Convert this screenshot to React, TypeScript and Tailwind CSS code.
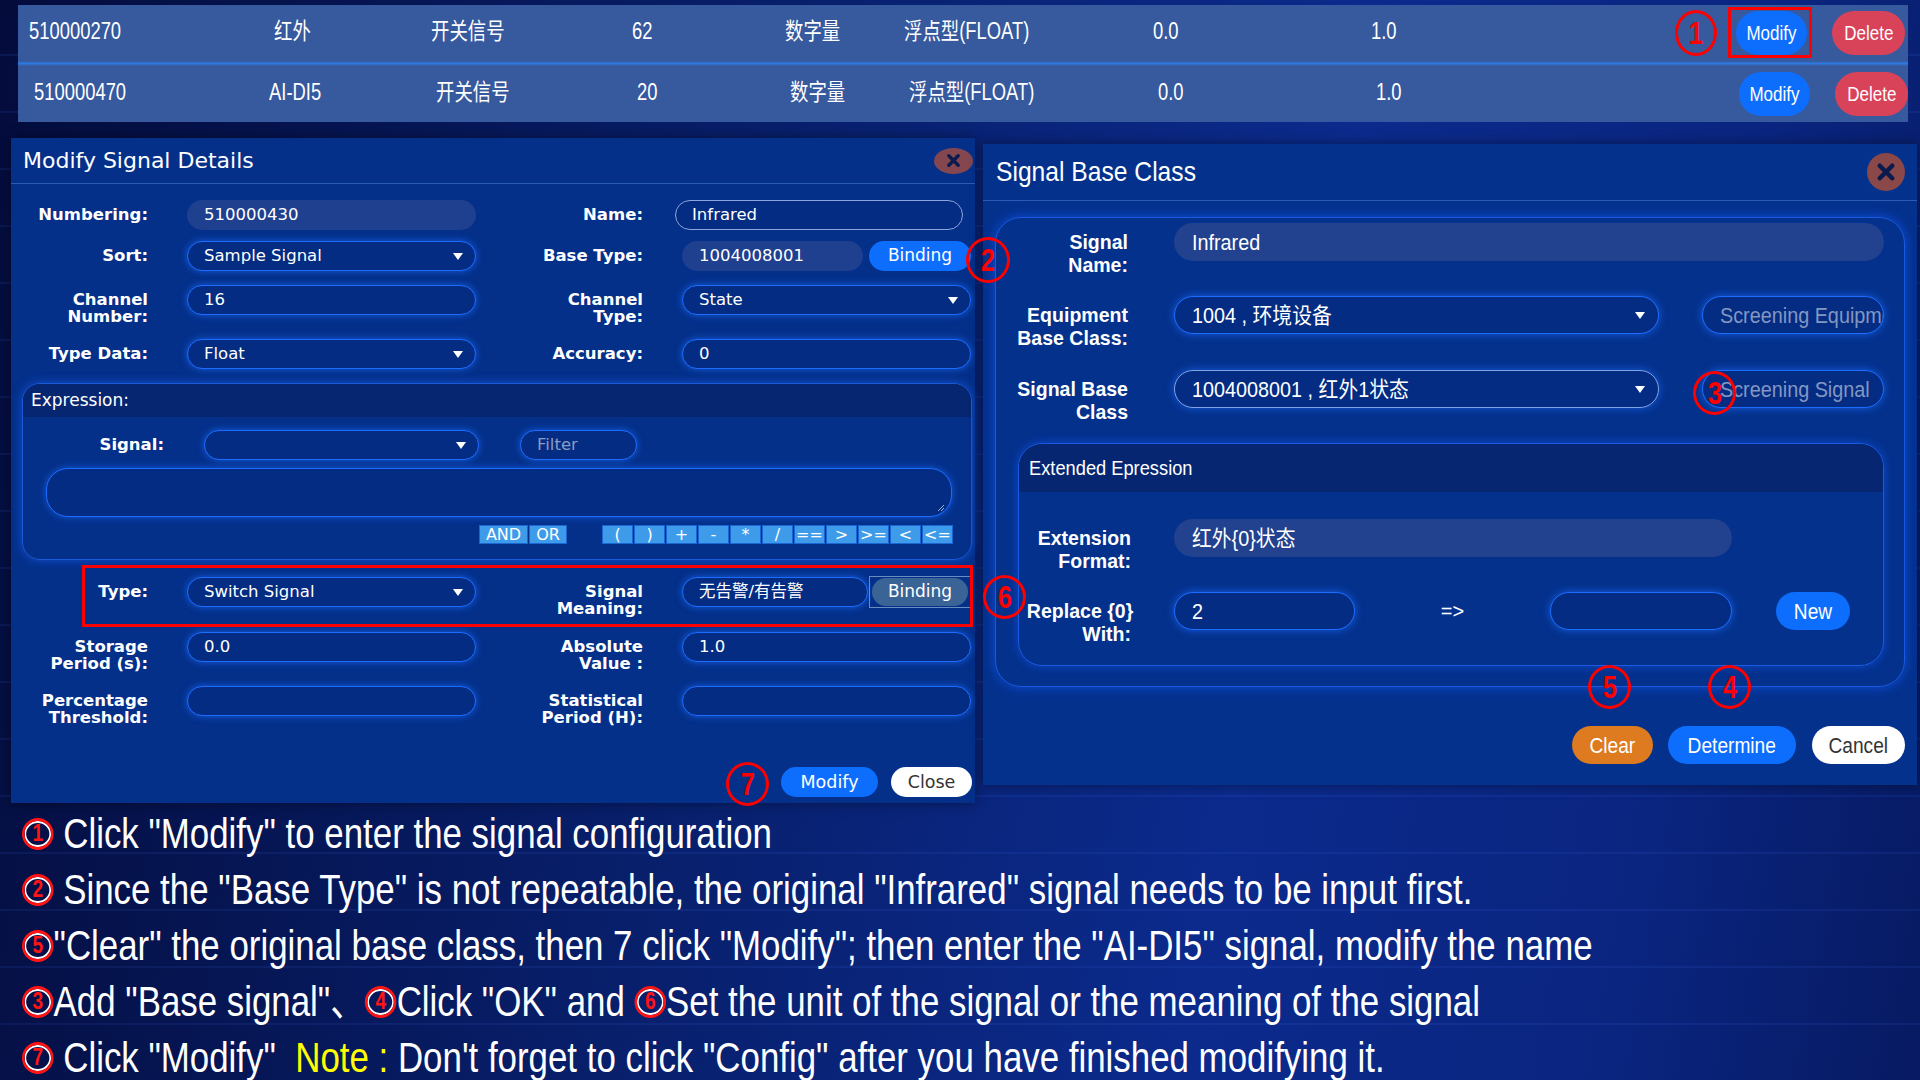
import React from 'react';

// signal config tutorial slide: table on top, two dialogs, steps underneath

const rows = [
  { id: '510000270', name: '红外', kind: '开关信号', ch: '62', q: '数字量', t: '浮点型(FLOAT)', a: '0.0', b: '1.0' },
  { id: '510000470', name: 'AI-DI5', kind: '开关信号', ch: '20', q: '数字量', t: '浮点型(FLOAT)', a: '0.0', b: '1.0' },
];

const ops = ['(', ')', '+', '-', '*', '/', '==', '>', '>=', '<', '<='];

const Caret = () => (
  <svg width="10" height="7" viewBox="0 0 10 7" className="shrink-0">
    <path d="M0 0h10L5 7z" fill="#ffffff" />
  </svg>
);

const CloseX = ({ size }: { size: number }) => (
  <svg width={size} height={size} viewBox="0 0 16 16">
    <path d="M3 3l10 10M13 3L3 13" stroke="#0b1a4c" strokeWidth="3.6" strokeLinecap="round" />
  </svg>
);

// red hand-drawn style circled number over the screenshot
const Mark = ({ n, className }: { n: string; className: string }) => (
  <div
    className={`absolute flex items-center justify-center rounded-[50%] border-[3px] border-[#ff0000] text-[#ff0000] font-bold text-[32px] leading-none font-['Liberation_Sans',sans-serif] ${className}`}
  >
    <span className="inline-block scale-x-[0.8]">{n}</span>
  </div>
);

// circled number in the step text (line gets squeezed, so it is drawn wider)
const Num = ({ n }: { n: string }) => (
  <span className="inline-flex items-center justify-center w-[38px] h-[32px] rounded-[50%] border-[3px] border-[#ff1414] text-[#ff1414] text-[23px] font-bold leading-none align-[7px] shadow-[inset_0_0_0_2px_#ffffff]">
    {n}
  </span>
);

type Kind = 'edit' | 'read' | 'focus';

function LInput({ value, kind = 'edit', caret, placeholder, className = 'w-[289px]' }: { value?: string; kind?: Kind; caret?: boolean; placeholder?: string; className?: string }) {
  const look =
    kind === 'read'
      ? 'bg-[#1f3f8f] border-transparent'
      : kind === 'focus'
        ? 'bg-[#032c82] border-[#8aa6dc]'
        : 'bg-[#032c82] border-[#1c6cff] shadow-[0_0_7px_rgba(30,110,255,0.75)]';
  return (
    <div className={`h-[30px] rounded-full border-[1.5px] ${look} flex items-center justify-between pl-[16px] pr-[12px] text-[16.5px] overflow-hidden whitespace-nowrap ${className}`}>
      <span className={placeholder ? 'text-[#8a9cc4]' : ''}>{value ?? placeholder}</span>
      {caret && <Caret />}
    </div>
  );
}

function LLabel({ lines, className }: { lines: string[]; className: string }) {
  return (
    <div className={`text-right font-bold text-[16.5px] leading-[17px] pt-[6px] whitespace-nowrap ${className}`}>
      {lines.map((l) => (
        <div key={l}>{l}</div>
      ))}
    </div>
  );
}

function LRow({ h, left, leftCtl, right, rightCtl }: { h: string; left: string[]; leftCtl: React.ReactNode; right: string[]; rightCtl: React.ReactNode }) {
  return (
    <div className={`flex ${h}`}>
      <LLabel lines={left} className="w-[137px]" />
      <div className="ml-[39px]">{leftCtl}</div>
      <LLabel lines={right} className="w-[167px]" />
      <div className="ml-[39px]">{rightCtl}</div>
    </div>
  );
}

function RInput({ value, kind = 'edit', caret, placeholder, className }: { value?: string; kind?: Kind; caret?: boolean; placeholder?: string; className: string }) {
  const look =
    kind === 'read'
      ? 'bg-[#22418f] border-transparent'
      : kind === 'focus'
        ? 'bg-[#032c82] border-[#7fa3e6] shadow-[0_0_8px_rgba(30,110,255,0.7)]'
        : 'bg-[#032c82] border-[#1c6cff] shadow-[0_0_8px_rgba(30,110,255,0.75)]';
  return (
    <div className={`relative h-[38px] rounded-full border-[1.5px] ${look} flex items-center pl-[17px] pr-[14px] text-[22px] overflow-hidden whitespace-nowrap ${className}`}>
      <span className={`inline-block origin-left scale-x-[0.9] ${placeholder ? 'text-[#8397c2]' : ''}`}>{value ?? placeholder}</span>
      {caret && (
        <span className="absolute right-[13px] top-[15px]">
          <Caret />
        </span>
      )}
    </div>
  );
}

function RLabel({ lines, className }: { lines: string[]; className: string }) {
  return (
    <div className={`text-right font-bold text-[21px] leading-[23px] pt-[7px] shrink-0 ${className}`}>
      {lines.map((l) => (
        <div key={l} className="whitespace-nowrap origin-right scale-x-[0.93]">
          {l}
        </div>
      ))}
    </div>
  );
}

function ModifyDialog() {
  return (
    <div className="w-[964px] h-[665px] bg-[#04308a] flex flex-col text-white font-['DejaVu_Sans','Noto_Sans_CJK_SC',sans-serif] shadow-[0_0_12px_rgba(0,0,0,0.4)]">
      <div className="h-[46px] shrink-0 flex items-center justify-between pl-[12px] pr-[2px] border-b border-[#2a5bb5]">
        <span className="text-[22px]">Modify Signal Details</span>
        <div className="w-[39px] h-[26px] rounded-[50%] bg-[#84474f] flex items-center justify-center">
          <CloseX size={15} />
        </div>
      </div>
      <div className="flex flex-col pt-[16px]">
        <LRow
          h="h-[41px]"
          left={['Numbering:']}
          leftCtl={<LInput value="510000430" kind="read" />}
          right={['Name:']}
          rightCtl={<LInput value="Infrared" kind="focus" className="w-[288px] -ml-[7px]" />}
        />
        <LRow
          h="h-[44px]"
          left={['Sort:']}
          leftCtl={<LInput value="Sample Signal" caret />}
          right={['Base Type:']}
          rightCtl={
            <div className="flex gap-[6px]">
              <LInput value="1004008001" kind="read" className="w-[181px]" />
              <div className="w-[102px] h-[30px] rounded-full bg-[#0d6efd] flex items-center justify-center text-[17px]">Binding</div>
            </div>
          }
        />
        <LRow h="h-[54px]" left={['Channel', 'Number:']} leftCtl={<LInput value="16" />} right={['Channel', 'Type:']} rightCtl={<LInput value="State" caret />} />
        <LRow h="h-[44px]" left={['Type Data:']} leftCtl={<LInput value="Float" caret />} right={['Accuracy:']} rightCtl={<LInput value="0" />} />

        <div className="ml-[11px] w-[950px] h-[177px] rounded-[18px] border border-[#1a5ad8] shadow-[0_0_10px_rgba(30,100,255,0.6)] flex flex-col overflow-hidden">
          <div className="h-[33px] shrink-0 bg-[#062672] flex items-center pl-[8px] text-[17px]">Expression:</div>
          <div className="flex items-center mt-[13px] h-[30px]">
            <div className="w-[141px] text-right font-bold text-[16.5px]">Signal:</div>
            <LInput kind="edit" caret value="" className="w-[275px] ml-[40px]" />
            <LInput kind="edit" placeholder="Filter" className="w-[117px] ml-[41px]" />
          </div>
          <div className="relative ml-[23px] mt-[8px] w-[906px] h-[49px] rounded-[22px] border-[1.5px] border-[#1c6cff] bg-[#032c82] shadow-[0_0_7px_rgba(30,110,255,0.7)]">
            <svg width="10" height="10" viewBox="0 0 10 10" className="absolute right-[6px] bottom-[4px]">
              <path d="M9 3L3 9M9 6L6 9" stroke="#9bb0d8" strokeWidth="1" />
            </svg>
          </div>
          <div className="flex mt-[8px] h-[19px] text-[16px] leading-none">
            <div className="ml-[456px] flex gap-[1px]">
              <div className="w-[49px] bg-[#3d9bea] border border-[#1c66d4] flex items-center justify-center">AND</div>
              <div className="w-[38px] bg-[#3d9bea] border border-[#1c66d4] flex items-center justify-center">OR</div>
            </div>
            <div className="ml-[35px] flex gap-[1px]">
              {ops.map((o) => (
                <div key={o} className="w-[31px] bg-[#3d9bea] border border-[#1c66d4] flex items-center justify-center">
                  {o}
                </div>
              ))}
            </div>
          </div>
        </div>

        <div className="mt-[17px]">
          <LRow
            h="h-[55px]"
            left={['Type:']}
            leftCtl={<LInput value="Switch Signal" caret />}
            right={['Signal', 'Meaning:']}
            rightCtl={
              <div className="flex">
                <LInput value="无告警/有告警" className="w-[186px]" />
                <div className="ml-[1px] w-[102px] h-[32px] -mt-[1px] border border-[#6b8cc0] flex items-center justify-center">
                  <div className="w-[96px] h-[28px] rounded-full bg-[#3a6496] flex items-center justify-center text-[17px]">Binding</div>
                </div>
              </div>
            }
          />
        </div>
        <LRow h="h-[54px]" left={['Storage', 'Period (s):']} leftCtl={<LInput value="0.0" />} right={['Absolute', 'Value :']} rightCtl={<LInput value="1.0" />} />
        <LRow h="h-[54px]" left={['Percentage', 'Threshold:']} leftCtl={<LInput value="" />} right={['Statistical', 'Period (H):']} rightCtl={<LInput value="" />} />

        <div className="mt-[27px] flex justify-end gap-[13px] pr-[3px] text-[17.5px]">
          <div className="w-[97px] h-[30px] rounded-full bg-[#0d6efd] flex items-center justify-center">Modify</div>
          <div className="w-[81px] h-[30px] rounded-full bg-white text-[#333333] flex items-center justify-center">Close</div>
        </div>
      </div>
    </div>
  );
}

function BaseClassDialog() {
  return (
    <div className="w-[934px] h-[641px] bg-[#04318c] flex flex-col text-white font-['Liberation_Sans','Noto_Sans_CJK_SC',sans-serif] shadow-[0_0_12px_rgba(0,0,0,0.4)]">
      <div className="h-[57px] shrink-0 flex items-center justify-between pl-[13px] pr-[12px] border-b border-[#2a5bb5]">
        <span className="text-[28px] inline-block origin-left scale-x-[0.88] whitespace-nowrap">Signal Base Class</span>
        <div className="w-[38px] h-[38px] rounded-full bg-[#8a4848] flex items-center justify-center">
          <CloseX size={20} />
        </div>
      </div>

      <div className="mt-[16px] ml-[12px] w-[910px] h-[470px] rounded-[26px] border border-[#1a5ae0] shadow-[0_0_12px_rgba(20,90,255,0.7)] pt-[5px] flex flex-col">
        <div className="flex h-[73px]">
          <RLabel lines={['Signal', 'Name:']} className="w-[132px]" />
          <RInput value="Infrared" kind="read" className="ml-[46px] w-[710px]" />
        </div>
        <div className="flex h-[74px]">
          <RLabel lines={['Equipment', 'Base Class:']} className="w-[132px]" />
          <RInput value="1004 , 环境设备" caret className="ml-[46px] w-[485px]" />
          <RInput placeholder="Screening Equipment" className="ml-[43px] w-[182px]" />
        </div>
        <div className="flex h-[73px]">
          <RLabel lines={['Signal Base', 'Class']} className="w-[132px]" />
          <RInput value="1004008001 , 红外1状态" caret kind="focus" className="ml-[46px] w-[485px]" />
          <RInput placeholder="Screening Signal" className="ml-[43px] w-[182px]" />
        </div>

        <div className="ml-[22px] w-[866px] h-[223px] rounded-[24px] border border-[#1a5ae0] shadow-[0_0_10px_rgba(20,90,255,0.6)] overflow-hidden flex flex-col">
          <div className="h-[48px] shrink-0 bg-[#062672] flex items-center pl-[10px] text-[21px]">
            <span className="inline-block origin-left scale-x-[0.87] whitespace-nowrap">Extended Epression</span>
          </div>
          <div className="flex h-[73px] mt-[27px]">
            <RLabel lines={['Extension', 'Format:']} className="w-[112px]" />
            <RInput value="红外{0}状态" kind="read" className="ml-[43px] w-[558px] text-[19px]" />
          </div>
          <div className="flex">
            <RLabel lines={['Replace {0}', 'With:']} className="w-[112px]" />
            <RInput value="2" className="ml-[43px] w-[181px]" />
            <div className="w-[195px] h-[38px] flex items-center justify-center text-[20px]">=&gt;</div>
            <RInput value="" className="w-[182px]" />
            <div className="ml-[44px] w-[74px] h-[38px] rounded-full bg-[#0d6efd] flex items-center justify-center text-[22px]">
              <span className="inline-block scale-x-[0.87]">New</span>
            </div>
          </div>
        </div>
      </div>

      <div className="mt-[39px] flex justify-end pr-[12px] text-[22px]">
        <div className="w-[81px] h-[38px] rounded-full bg-[#de7a1f] flex items-center justify-center">
          <span className="inline-block scale-x-[0.87]">Clear</span>
        </div>
        <div className="ml-[15px] w-[128px] h-[38px] rounded-full bg-[#0d6efd] flex items-center justify-center">
          <span className="inline-block scale-x-[0.87]">Determine</span>
        </div>
        <div className="ml-[16px] w-[93px] h-[38px] rounded-full bg-white text-[#333333] flex items-center justify-center">
          <span className="inline-block scale-x-[0.87]">Cancel</span>
        </div>
      </div>
    </div>
  );
}

function SignalTable() {
  return (
    <div className="ml-[18px] mt-[5px] w-[1890px] bg-[#37599d] text-white text-[23px] font-['Liberation_Sans','Noto_Sans_CJK_SC',sans-serif]">
      {rows.map((r, i) => (
        <React.Fragment key={r.id}>
          {i > 0 && <div className="h-[5px] bg-[linear-gradient(180deg,#37599d,#2f7ae0,#37599d)]" />}
          <div className={`h-[56px] pb-[4px] grid grid-cols-[245px_157px_201px_153px_119px_249px_218px_200px_1fr] items-center ${i === 0 ? 'pl-[11px]' : 'pl-[16px]'}`}>
            {[r.id, r.name, r.kind, r.ch, r.q, r.t, r.a, r.b].map((c, j) => (
              <span key={j} className={`inline-block origin-left scale-x-[0.8] whitespace-nowrap ${i === 1 && j === 1 ? '-ml-[10px]' : ''}`}>
                {c}
              </span>
            ))}
            <div className={`flex items-center justify-end gap-[25px] text-[20px] pt-[4px] ${i === 0 ? 'pr-[3px]' : 'pr-0'}`}>
              <div className="w-[71px] h-[44px] rounded-full bg-[#0d6efd] flex items-center justify-center">
                <span className="inline-block scale-x-[0.85]">Modify</span>
              </div>
              <div className="w-[73px] h-[44px] rounded-full bg-[#d9435a] flex items-center justify-center">
                <span className="inline-block scale-x-[0.85]">Delete</span>
              </div>
            </div>
          </div>
        </React.Fragment>
      ))}
    </div>
  );
}

function Steps() {
  return (
    <div className="mt-[3px] pl-[22px] text-white text-[42px] leading-[56px] whitespace-nowrap font-['Liberation_Sans','Noto_Sans_CJK_SC',sans-serif]">
      <div className="origin-left scale-x-[0.83]">
        <Num n="1" /> Click "Modify" to enter the signal configuration
      </div>
      <div className="origin-left scale-x-[0.83]">
        <Num n="2" /> Since the "Base Type" is not repeatable, the original "Infrared" signal needs to be input first.
      </div>
      <div className="origin-left scale-x-[0.83]">
        <Num n="5" />"Clear" the original base class, then 7 click "Modify"; then enter the "AI-DI5" signal, modify the name
      </div>
      <div className="origin-left scale-x-[0.83]">
        <Num n="3" />Add "Base signal"、<Num n="4" />Click "OK" and <Num n="6" />Set the unit of the signal or the meaning of the signal
      </div>
      <div className="origin-left scale-x-[0.83]">
        <Num n="7" /> Click "Modify"&nbsp; <span className="text-[#ffff00]">Note :</span> Don't forget to click "Config" after you have finished modifying it.
      </div>
    </div>
  );
}

export default function App() {
  return (
    <div className="relative w-[1920px] h-[1080px] overflow-hidden bg-[linear-gradient(100deg,#040c3c_0%,#08206e_40%,#0b2a8c_65%,#0a2580_85%,#071a62_100%)]">
      <div className="absolute inset-0 bg-[repeating-linear-gradient(0deg,transparent_0px,transparent_55px,rgba(70,120,255,0.10)_55px,rgba(70,120,255,0.10)_57px)]" />
      <div className="relative">
        <SignalTable />
        <div className="flex items-start">
          <div className="ml-[11px] mt-[16px]">
            <ModifyDialog />
          </div>
          <div className="ml-[8px] mt-[22px]">
            <BaseClassDialog />
          </div>
        </div>
        <Steps />
      </div>

      {/* annotations drawn over the screenshot */}
      <div className="absolute left-[1728px] top-[7px] w-[84px] h-[51px] border-[3px] border-[#ff0000]" />
      <div className="absolute left-[82px] top-[565px] w-[891px] h-[62px] border-[3px] border-[#ff0000]" />
      <Mark n="1" className="left-[1675px] top-[10px] w-[42px] h-[46px]" />
      <Mark n="2" className="left-[966px] top-[237px] w-[44px] h-[46px]" />
      <Mark n="3" className="left-[1693px] top-[371px] w-[43px] h-[44px]" />
      <Mark n="4" className="left-[1708px] top-[665px] w-[43px] h-[44px]" />
      <Mark n="5" className="left-[1588px] top-[665px] w-[43px] h-[44px]" />
      <Mark n="6" className="left-[983px] top-[575px] w-[43px] h-[44px]" />
      <Mark n="7" className="left-[726px] top-[762px] w-[43px] h-[44px]" />
    </div>
  );
}
